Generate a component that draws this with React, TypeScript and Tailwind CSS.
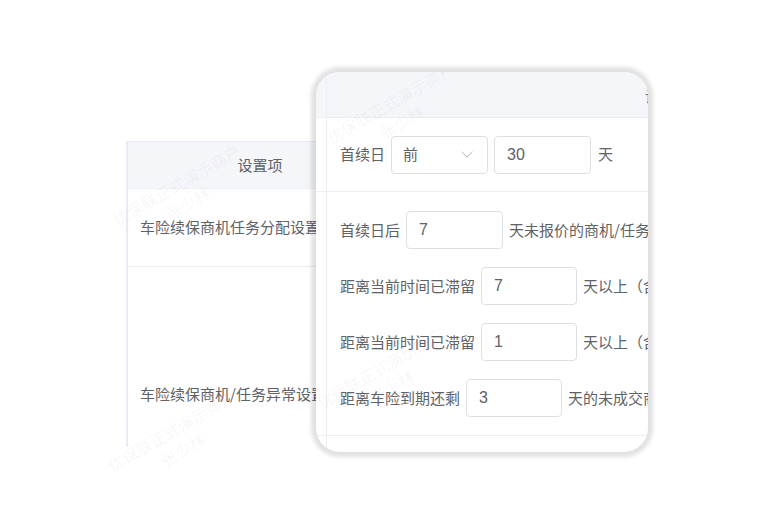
import React from "react";

const font = { fontFamily: '"Noto Sans CJK SC", "Noto Sans", sans-serif' };

function Watermark({ x, y }: { x: number; y: number }) {
  return (
    <div
      className="absolute pointer-events-none flex flex-col items-center text-[16px] leading-[22px] text-[rgba(0,0,0,0.05)] whitespace-nowrap -rotate-[30deg] origin-center"
      style={{ left: x, top: y }}
    >
      <span>优保联正式演示商户</span>
      <span>张少林</span>
    </div>
  );
}

function Box({ value, w = "w-[97px]" }: { value: string; w?: string }) {
  return (
    <div
      className={`${w} h-[38px] shrink-0 border border-[#dcdfe6] rounded-[4px] bg-white flex items-center px-[12px] text-[16px] text-[#606266]`}
      style={{ fontFamily: '"Liberation Sans", "Noto Sans CJK SC", sans-serif' }}
    >
      {value}
    </div>
  );
}

function Strip() {
  return <div className="w-[11px] shrink-0 border-r border-[#ebeef5]" />;
}

export default function App() {
  return (
    <div className="relative w-[784px] h-[527px] bg-white overflow-hidden text-[#606266]" style={font}>
      {/* background table */}
      <div className="pt-[141px] pl-[126px]">
        <div className="w-[300px] h-[306px] overflow-hidden border-l-2 border-t border-[#e8ebf3] bg-white">
          <div className="h-[47px] bg-[#f5f6fa] border-b border-[#ebeef5] flex items-center">
            <div className="w-[264px] text-center text-[15px]">设置项</div>
          </div>
          <div className="h-[78px] border-b border-[#ebeef5] flex items-center pl-[12px] text-[15px] whitespace-nowrap">
            车险续保商机任务分配设置
          </div>
          <div className="h-[254px] flex items-center pl-[12px] text-[15px] whitespace-nowrap">
            车险续保商机/任务异常设置
          </div>
        </div>
      </div>

      <Watermark x={110} y={172} />
      <Watermark x={105} y={418} />

      {/* magnified card */}
      <div className="absolute left-[316px] top-[72px] w-[332px] h-[380px] rounded-[24px] bg-white overflow-hidden shadow-[0_0_4px_5px_rgba(0,0,0,0.12)]">
        <div className="h-[46px] bg-[#f5f6fa] border-b border-[#ebeef5] flex">
          <Strip />
          <div className="flex-1 min-w-0 flex items-center pl-[318px] pt-[4px] text-[15px] whitespace-nowrap">设置内容</div>
        </div>
        <div className="h-[74px] border-b border-[#ebeef5] flex">
          <Strip />
          <div className="flex-1 min-w-0 flex items-center pl-[13px] gap-[6px] text-[15px] whitespace-nowrap">
            <span>首续日</span>
            <div className="w-[97px] h-[38px] shrink-0 border border-[#dcdfe6] rounded-[4px] flex items-center justify-between pl-[11px] pr-[14px]">
              <span className="text-[15px]">前</span>
              <svg width="12" height="7" viewBox="0 0 12 7" fill="none">
                <path d="M0.5 0.8 L6 6 L11.5 0.8" stroke="#b4b7bd" strokeWidth="1" />
              </svg>
            </div>
            <Box value="30" />
            <span className="ml-[1px]">天</span>
          </div>
        </div>
        <div className="border-b border-[#ebeef5] flex">
          <Strip />
          <div className="flex-1 min-w-0 pt-[19px] pb-[18px] pl-[13px] flex flex-col gap-[18px] text-[15px] whitespace-nowrap">
            <div className="h-[38px] flex items-center gap-[6px]">
              <span>首续日后</span>
              <Box value="7" />
              <span>天未报价的商机/任务</span>
            </div>
            <div className="h-[38px] flex items-center gap-[6px]">
              <span>距离当前时间已滞留</span>
              <Box value="7" w="w-[96px]" />
              <span>天以上（含）</span>
            </div>
            <div className="h-[38px] flex items-center gap-[6px]">
              <span>距离当前时间已滞留</span>
              <Box value="1" w="w-[96px]" />
              <span>天以上（含）</span>
            </div>
            <div className="h-[38px] flex items-center gap-[6px]">
              <span>距离车险到期还剩</span>
              <Box value="3" w="w-[96px]" />
              <span>天的未成交商机</span>
            </div>
          </div>
        </div>
        <div className="h-[40px] flex">
          <Strip />
        </div>

        <Watermark x={8} y={18} />
        <Watermark x={-2} y={283} />
      </div>
    </div>
  );
}
